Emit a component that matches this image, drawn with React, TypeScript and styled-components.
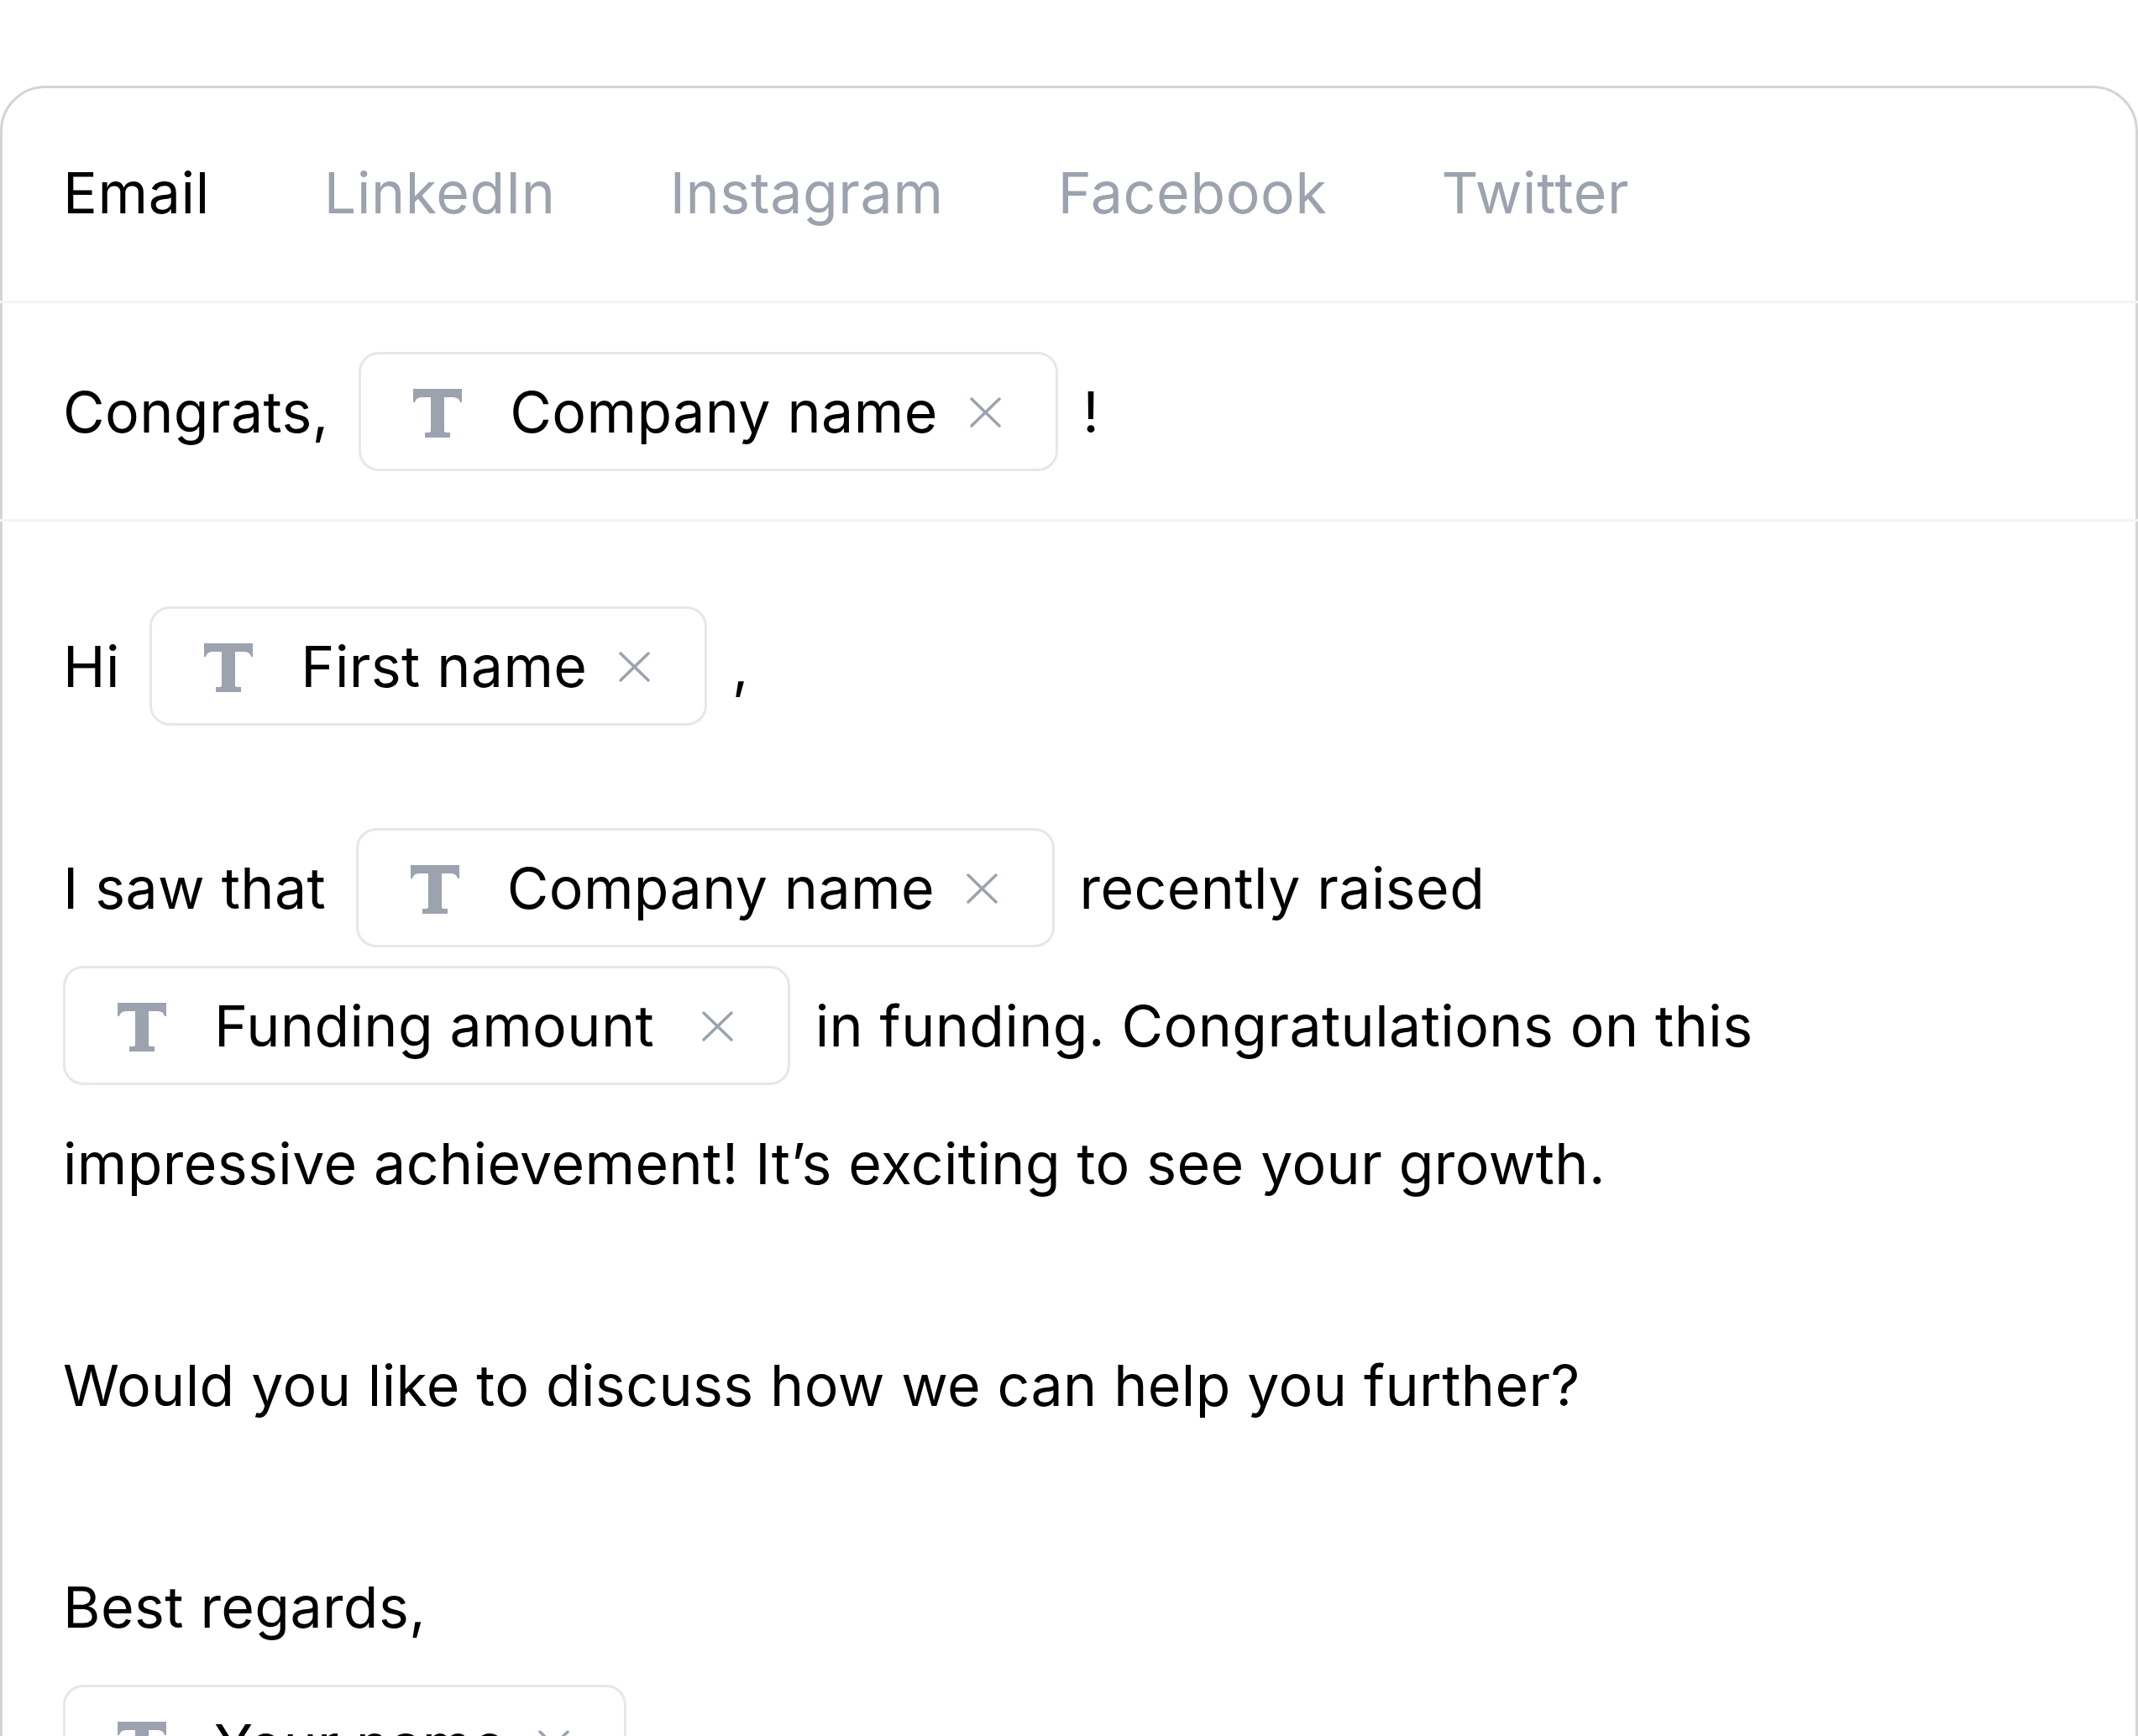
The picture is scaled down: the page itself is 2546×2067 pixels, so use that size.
import React from 'react';
import styled, { createGlobalStyle } from 'styled-components';

const GlobalStyle = createGlobalStyle`
  *, *::before, *::after { box-sizing: border-box; }
  html, body {
    margin: 0;
    padding: 0;
    background: #fff;
    overflow: hidden;
  }
  body {
    font-family: Inter, "Noto Sans", sans-serif;
    color: #000;
    letter-spacing: 0.4px;
  }
`;

const Page = styled.div`
  padding-top: 102px;
`;

const Card = styled.div`
  border: 3px solid #d4d4d4;
  border-radius: 54px;
  background: #fff;
  padding-bottom: 160px;
`;

const Tabs = styled.nav`
  display: flex;
  align-items: center;
  gap: 136px;
  height: 253px;
  padding: 0 0 6px 72px;
`;

const Tab = styled.span<{ $active?: boolean }>`
  font-size: 68px;
  letter-spacing: 0.65px;
  color: ${(p) => (p.$active ? '#000' : '#9ca3af')};
  cursor: pointer;
`;

const Section = styled.div`
  margin: 0 -3px;
  border-top: 3px solid #f3f4f6;
  padding-left: 75px;
`;

const Subject = styled(Section)`
  display: flex;
  align-items: center;
  height: 260px;
`;

const Body = styled(Section)`
  padding-top: 90px;
  padding-right: 150px;
`;

const Line = styled.p`
  margin: 0;
  font-size: 68px;
  line-height: 164px;

  & + & {
    margin-top: 100px;
  }
`;

const Chip = styled.span<{ $lead?: boolean }>`
  display: inline-block;
  height: 142px;
  line-height: 136px;
  padding: 0 65px 0 62px;
  margin: 0 10px 0 ${(p) => (p.$lead ? 0 : 16)}px;
  border: 3px solid #e5e7eb;
  border-radius: 24px;
  white-space: nowrap;
  background: #fff;
`;

const TypeGlyph = styled.svg`
  width: 58px;
  height: 58px;
  vertical-align: -6px;
  margin-right: 57px;
  fill: #9ca3af;
`;

const RemoveGlyph = styled.svg<{ $space: number }>`
  width: 37px;
  height: 36px;
  vertical-align: 6px;
  margin-left: ${(p) => p.$space}px;
  stroke: #9ca3af;
  stroke-width: 3.5;
  stroke-linecap: round;
  cursor: pointer;
`;

const TypeIcon = () => (
  <TypeGlyph viewBox="0 0 58 58">
    <path d="M0 0H58V16H56C55 12 52 10 47 10H37V50C37 52 39 52 44 52V58H14V52C19 52 21 52 21 50V10H11C6 10 3 12 2 16H0Z" />
  </TypeGlyph>
);

const RemoveIcon = ({ space = 38 }: { space?: number }) => (
  <RemoveGlyph $space={space} viewBox="0 0 37 36">
    <line x1="2" y1="2" x2="35" y2="34" />
    <line x1="35" y1="2" x2="2" y2="34" />
  </RemoveGlyph>
);

const Variable = ({ label, lead, space }: { label: string; lead?: boolean; space?: number }) => (
  <Chip $lead={lead}>
    <TypeIcon />
    {label}
    <RemoveIcon space={space} />
  </Chip>
);

const tabs = ['Email', 'LinkedIn', 'Instagram', 'Facebook', 'Twitter'];

const App = () => {
  return (
    <Page>
      <GlobalStyle />
      <Card>
        <Tabs>
          {tabs.map((t, i) => (
            <Tab key={t} $active={i === 0}>
              {t}
            </Tab>
          ))}
        </Tabs>
        <Subject>
          <Line>
            Congrats, <Variable label="Company name" /> !
          </Line>
        </Subject>
        <Body>
          <Line>
            Hi <Variable label="First name" /> ,
          </Line>
          <Line>
            I saw that <Variable label="Company name" /> recently raised{' '}
            <Variable label="Funding amount" lead space={57} /> in funding. Congratulations on this
            impressive achievement! It’s exciting to see your growth.
          </Line>
          <Line>Would you like to discuss how we can help you further?</Line>
          <Line>
            Best regards,
            <br />
            <Variable label="Your name" lead />
          </Line>
        </Body>
      </Card>
    </Page>
  );
};

export default App;
